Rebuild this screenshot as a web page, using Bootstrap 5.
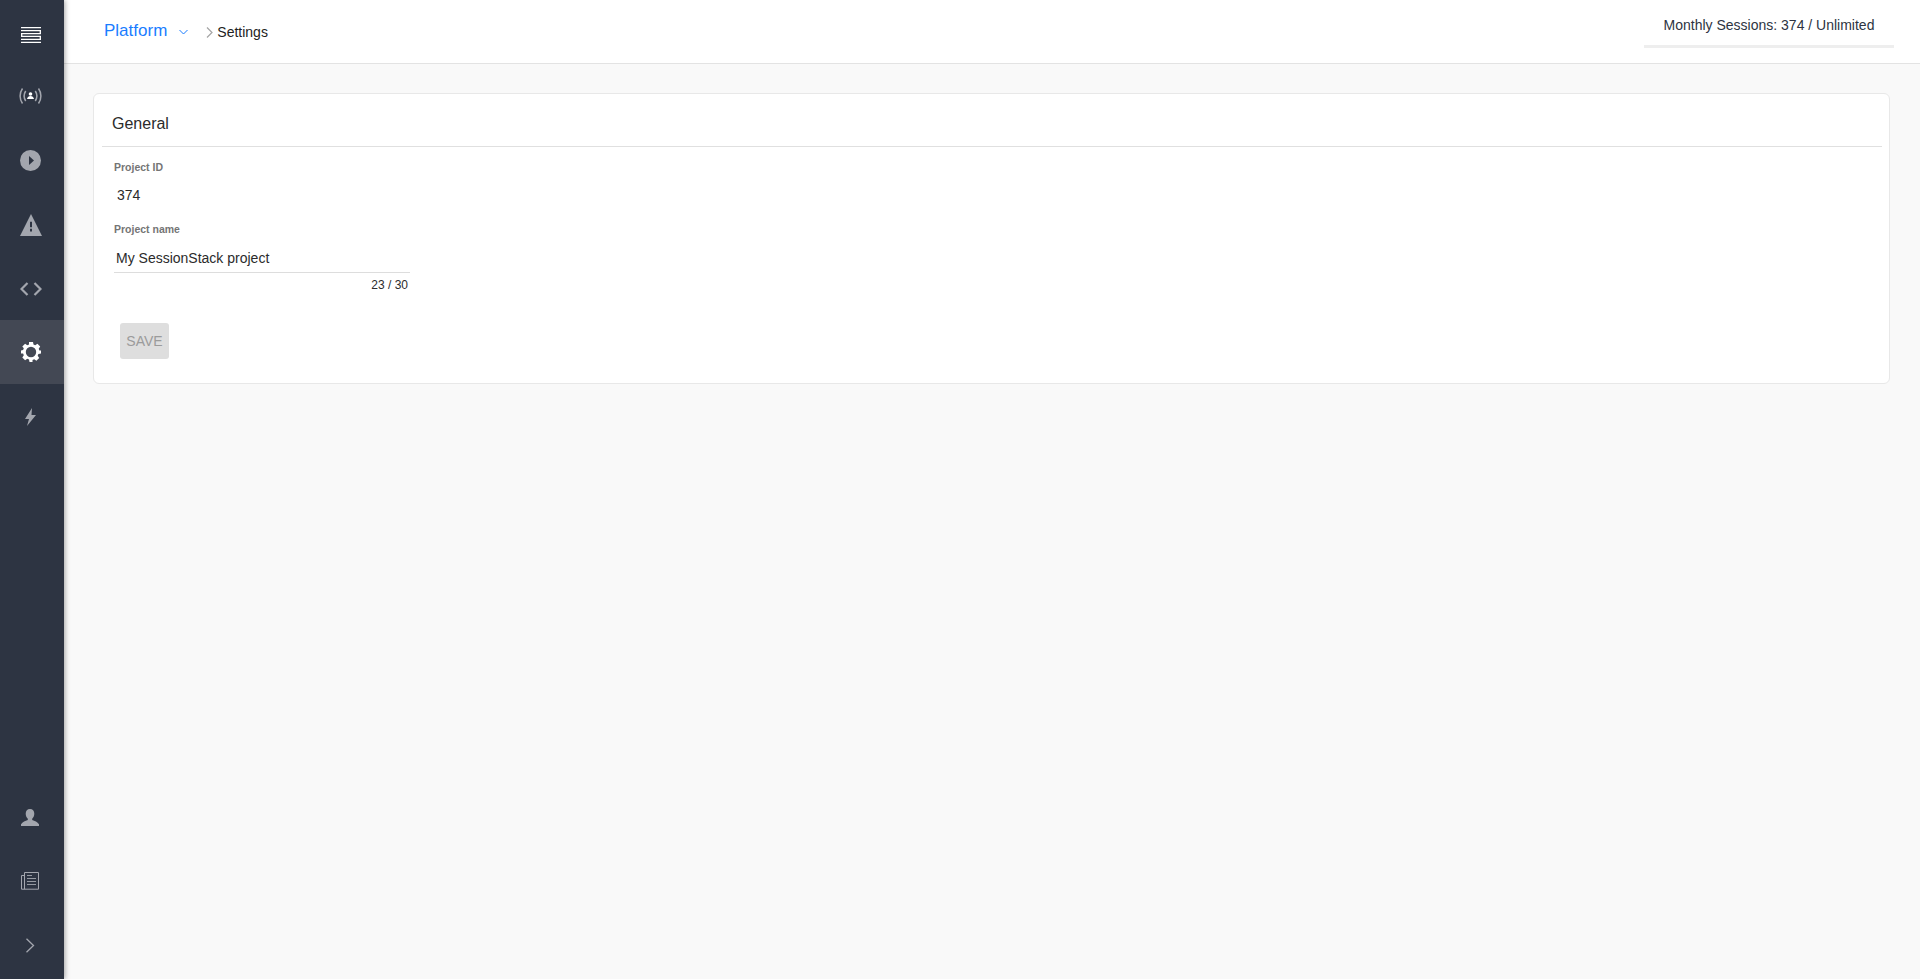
<!DOCTYPE html>
<html lang="en">
<head>
    <meta charset="UTF-8">
    <title>Settings - SessionStack</title>
    <link href="https://cdn.jsdelivr.net/npm/bootstrap@5.3.0/dist/css/bootstrap.min.css" rel="stylesheet">
    <style>
        html, body { height: 100%; }
        body {
            background-color: #f9f9f9;
            font-family: "Liberation Sans", Arial, sans-serif;
            font-size: 14px;
            color: #2b2b2b;
            overflow: hidden;
        }
        .side-rail {
            width: 64px;
            background-color: #2d3442;
            box-shadow: 1px 0 5px rgba(0,0,0,.35);
            z-index: 2;
        }
        .rail-item {
            height: 64px;
            color: #a3a6ae;
            padding-right: 3px;
        }
        .rail-item.is-active {
            background-color: #434854;
            color: #fff;
        }
        .rail-item.is-top { color: #fff; padding-top: 5px; padding-right: 2px; }
        .rail-item.is-low { padding-top: 2px; }
        .rail-bottom { padding-bottom: 2px; }
        .rail-bottom .rail-item { padding-right: 5px; }
        .top-strip {
            height: 64px;
            background-color: #fff;
            border-bottom: 1px solid #e3e3e3;
            padding-left: 40px;
            padding-right: 26px;
        }
        .crumb-main { font-size: 17px; color: #1a7dff; margin-top: -2px; }
        .crumb-drop { margin: 0 18px 0 12px; color: #1a7dff; }
        .crumb-sep { margin-right: 4px; color: #a5a5a5; margin-top: 1px; }
        .crumb-page { color: #222; margin-top: 1px; }
        .usage-box {
            width: 250px;
            height: 48px;
            padding-top: 15px;
            text-align: center;
            color: #2d3442;
            border-bottom: 3px solid #eee;
            align-self: flex-start;
        }
        .page-body { padding: 29px 30px 0 29px; }
        .settings-card {
            border: 1px solid #e8e8e8;
            border-radius: 6px;
            height: 291px;
            padding: 0 7px 0 8px;
        }
        .settings-head {
            height: 53px;
            padding: 20px 10px 0 10px;
            font-size: 16px;
            line-height: 19px;
            border-bottom: 1px solid #e0e0e0;
            color: #2b2b2b;
        }
        .field-wrap { width: 296px; margin-left: 12px; }
        .field-label {
            font-size: 10.5px;
            font-weight: 700;
            color: #757575;
            line-height: 13px;
            margin: 0;
        }
        .field-label.field-first { margin-top: 14px; }
        .field-static { padding: 13px 0 0 3px; line-height: 16px; height: 49px; }
        .field-input.form-control {
            border: 0;
            border-bottom: 1px solid #ddd;
            border-radius: 0;
            background: transparent;
            font-size: 14px;
            line-height: 16px;
            height: 37px;
            padding: 14px 2px 6px 2px;
            color: #2b2b2b;
        }
        .field-count { font-size: 12px; line-height: 14px; text-align: right; padding: 5px 2px 0 0; }
        .save-btn.btn {
            background-color: #dedede;
            border: 0;
            border-radius: 3px;
            color: #9b9b9b;
            font-size: 14px;
            width: 49px;
            height: 36px;
            padding: 0;
            margin: 31px 0 0 6px;
            opacity: 1;
        }
    </style>
</head>
<body>

<div class="d-flex h-100">
    <nav class="side-rail d-flex flex-column flex-shrink-0">
        <div class="rail-item is-top d-flex align-items-center justify-content-center">
            <svg width="20" height="16" viewBox="0 0 20 16" fill="none" stroke="currentColor" stroke-width="1.3"><path d="M0 .7h20M0 3.700h20M0 6.700h20M0 9.300h20M0 12.300h20M0 15.300h20"/><path d="M19.300 3.700v3M.7 6.700v2.600M19.300 9.300v3"/></svg>
        </div>
        <div class="rail-item d-flex align-items-center justify-content-center">
            <svg width="27" height="18" viewBox="0 0 24 18" fill="none" stroke="currentColor" stroke-width="1.500"><path d="M4 1.500C.8 6 .8 12 4 16.500M7.200 4C5.300 7 5.300 11 7.200 14M20 1.500c3.200 4.500 3.200 10.500 0 15M16.800 4c1.900 3 1.900 7 0 10"/><circle cx="12" cy="7" r="1.800" fill="#fff" stroke="none"/><path d="M8.500 12c.4-2 1.800-3 3.500-3s3.100 1 3.500 3z" fill="#fff" stroke="none"/></svg>
        </div>
        <div class="rail-item d-flex align-items-center justify-content-center">
            <svg width="21" height="21" viewBox="0 0 21 21"><circle cx="10.500" cy="10.500" r="10.500" fill="currentColor"/><path d="M9 6l5 4.500-5 4.500z" fill="#2d3442"/></svg>
        </div>
        <div class="rail-item is-low d-flex align-items-center justify-content-center">
            <svg width="22" height="22" viewBox="0 0 22 20" preserveAspectRatio="none"><path fill-rule="evenodd" fill="currentColor" d="M11 0l11 20H0zM10 7v5h2V7zm0 6.500V16h2v-2.500z"/></svg>
        </div>
        <div class="rail-item is-low d-flex align-items-center justify-content-center">
            <svg width="22" height="14" viewBox="0 0 22 14" fill="none" stroke="currentColor" stroke-width="2.200"><path d="M7.500 1L1.500 7l6 6M14.500 1l6 6-6 6"/></svg>
        </div>
        <div class="rail-item is-active d-flex align-items-center justify-content-center">
            <svg width="20" height="20" viewBox="0 0 20 20"><path fill-rule="evenodd" fill="currentColor" d="M8 0h4l.5 2.600 1.700.7 2.200-1.500 2.800 2.800-1.500 2.200.7 1.700L20 8.500v3l-2.600.5-.7 1.700 1.500 2.200-2.800 2.800-2.200-1.500-1.700.7L11.500 20h-3L8 17.400l-1.700-.7-2.200 1.500-2.800-2.800 1.500-2.200-.7-1.700L0 11.500v-3l2.100-.5.700-1.700L1.300 4.600 4.100 1.800l2.200 1.500L8 2.600zM10 4.800a5.200 5.200 0 1 0 0 10.400 5.200 5.200 0 0 0 0-10.400z"/></svg>
        </div>
        <div class="rail-item is-low d-flex align-items-center justify-content-center">
            <svg width="11" height="18" viewBox="0 0 11 18"><path fill="currentColor" d="M7 0L0 11h4l-2 7 9-11H6.500z"/></svg>
        </div>
        <div class="rail-bottom mt-auto">
            <div class="rail-item d-flex align-items-center justify-content-center">
                <svg width="18" height="17" viewBox="0 0 18 17"><path fill="currentColor" d="M9 0c2.700 0 4.300 2 4.300 4.800 0 2.300-1 4-2.100 5v1.300c2.500.9 5.200 2 6.800 4.200v1.700H0v-1.700c1.600-2.200 4.300-3.300 6.800-4.200V9.800c-1.100-1-2.100-2.700-2.100-5C4.700 2 6.300 0 9 0z"/></svg>
            </div>
            <div class="rail-item d-flex align-items-center justify-content-center">
                <svg width="18" height="18" viewBox="0 0 18 18" fill="none" stroke="currentColor"><path d="M3.500.5h14v16.700H.5V3.500h3M3.500.5v16.700"/><path d="M6 3.500h5M6 6.500h9M6 9.500h9M6 12.500h9" stroke-width=".9"/></svg>
            </div>
            <div class="rail-item d-flex align-items-center justify-content-center">
                <svg width="10" height="15" viewBox="0 0 10 15" fill="none" stroke="currentColor" stroke-width="1.300"><path d="M1.500 .8L8.500 7.500 1.500 14.200"/></svg>
            </div>
        </div>
    </nav>

    <div class="flex-grow-1 d-flex flex-column">
        <header class="top-strip d-flex align-items-center justify-content-between">
            <div class="d-flex align-items-center">
                <a class="crumb-main text-decoration-none" href="#">Platform</a>
                <svg class="crumb-drop" width="9" height="6" viewBox="0 0 9 6" fill="none" stroke="currentColor"><path d="M.5 1l4 4 4-4"/></svg>
                <svg class="crumb-sep" width="7" height="11" viewBox="0 0 7 11" fill="none" stroke="currentColor" stroke-width="1.200"><path d="M1 .5l5 5-5 5"/></svg>
                <span class="crumb-page">Settings</span>
            </div>
            <div class="usage-box">Monthly Sessions: 374 / Unlimited</div>
        </header>

        <main class="page-body">
            <div class="settings-card card">
                <div class="settings-head">General</div>
                <div class="field-wrap">
                    <p class="field-label field-first">Project ID</p>
                    <div class="field-static">374</div>
                    <label class="field-label d-block" for="projectName">Project name</label>
                    <input id="projectName" class="field-input form-control" value="My SessionStack project">
                    <div class="field-count">23 / 30</div>
                    <button class="save-btn btn" disabled>SAVE</button>
                </div>
            </div>
        </main>
    </div>
</div>

<script src="https://cdn.jsdelivr.net/npm/bootstrap@5.3.0/dist/js/bootstrap.bundle.min.js"></script>
</body>
</html>
